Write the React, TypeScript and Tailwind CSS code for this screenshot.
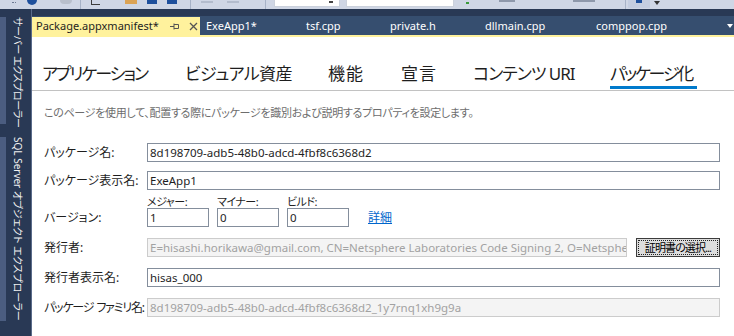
import React from 'react';

const TOOL_BG = 'bg-[#cfd6e5]';

const Toolbar: React.FC = () => (
  <div className={`h-[9px] ${TOOL_BG} flex items-start overflow-hidden shrink-0`}>
    <div className="ml-[12px] mt-[2px] h-[2px] w-[4px] border-t border-dotted border-[#6d7a93]" />
    <div className="ml-[11px] h-[5px] w-[10px] rounded-b-full bg-[#1e4f9c]" />
    <div className="ml-[23px] h-[4px] w-[12px] rounded-b-full bg-[#b8bfcc]" />
    <div className="ml-[8px] h-[9px] w-px bg-[#a7b2c7]" />
    <div className="ml-[10px] h-[5px] w-[9px] border-b border-l border-[#3c3c3c]" />
    <div className="ml-[25px] h-[4px] w-[12px] bg-[#dba355]" />
    <div className="ml-[10px] h-[4px] w-[10px] bg-[#1e4f9c]" />
    <div className="ml-[10px] h-[4px] w-[10px] bg-[#1e4f9c]" />
    <div className="ml-[13px] h-[9px] w-px bg-[#a7b2c7]" />
    <div className="ml-[10px] mt-[1px] h-[2px] w-[12px] bg-[#b3bccd]" />
    <div className="ml-[14px] mt-[1px] h-[2px] w-[12px] bg-[#b3bccd]" />
    <div className="ml-[26px] h-[9px] w-px bg-[#a7b2c7]" />
    <div className="ml-[8px] h-[7px] w-[66px] bg-white border-b border-x border-[#cbd1dc] flex justify-end">
      <div className="mr-[6px] mt-[1px] h-[2px] w-[4px] bg-[#444]" />
    </div>
    <div className="ml-[6px] h-[7px] w-[108px] bg-white border-b border-x border-[#cbd1dc]" />
    <div className="ml-[12px] mt-[2px] h-[2px] w-[3px] bg-[#3a9a3a]" />
    <div className="ml-[30px] h-[2px] w-[16px] bg-[#8e98ab]" />
    <div className="ml-[58px] h-[2px] w-[22px] bg-[#8e98ab]" />
    <div className="ml-[30px] h-[9px] w-px bg-[#a7b2c7]" />
    <div className="ml-[2px] h-[8px] w-[22px] bg-[#c4cde0] flex justify-center">
      <div className="h-[3px] w-[6px] bg-[#1e4f9c]" />
    </div>
    <div className="ml-[4px] mt-[1px] w-0 h-0 border-x-[3px] border-x-transparent border-t-[4px] border-t-[#333]" />
  </div>
);

const SideTab: React.FC<{ label: string; h: string; mt: string; tr: string }> = ({ label, h, mt, tr }) => (
  <div className={`flex ${h} ${mt}`}>
    <div className="w-[6px] bg-[#4b5d80]" />
    <div className={`ml-[5px] w-[13px] flex justify-start leading-[13px] text-[#f0f0f0] [writing-mode:vertical-rl] [text-orientation:sideways] whitespace-nowrap ${tr}`}>
      {label}
    </div>
  </div>
);

const Sidebar: React.FC = () => (
  <div className="w-[32px] shrink-0 bg-[#293955] border-r border-[#5a6b8a] flex flex-col">
    <SideTab label="サーバー エクスプローラー" h="h-[107px]" mt="mt-[8px]" tr="text-[10px] tracking-[-0.4px]" />
    <SideTab label="SQL Server オブジェクト エクスプローラー" h="h-[184px]" mt="mt-[13px]" tr="text-[10px] tracking-[0px]" />
  </div>
);

const DocTab: React.FC<{ name: string; w: string }> = ({ name, w }) => (
  <div className={`${w} shrink-0 pl-[6px] text-[11px] leading-[19px] text-white whitespace-nowrap`}>{name}</div>
);

const TabStrip: React.FC = () => (
  <div className="shrink-0">
    <div className="h-[7px] bg-[#293955]" />
    <div className="h-[19px] bg-[#364e6f] flex items-end">
      <div className="w-[168px] h-[18px] bg-[#fff29d] flex items-center pl-[4px] text-[11px] text-[#1e1e1e] whitespace-nowrap">
        <span className="w-[125px]">Package.appxmanifest*</span>
        <svg className="ml-[9px]" width="9" height="9" viewBox="0 0 9 9">
          <path d="M0 4.5H4M4 1.5V7.5M4 2.5H8.5V6.5H4" stroke="#555" fill="none" strokeWidth="1" />
        </svg>
        <svg className="ml-[10px]" width="9" height="9" viewBox="0 0 9 9">
          <path d="M1 1L8 8M8 1L1 8" stroke="#555" strokeWidth="1.3" />
        </svg>
      </div>
      <DocTab name="ExeApp1*" w="w-[100px]" />
      <DocTab name="tsf.cpp" w="w-[84px]" />
      <DocTab name="private.h" w="w-[95px]" />
      <DocTab name="dllmain.cpp" w="w-[111px]" />
      <DocTab name="comppop.cpp" w="w-[110px]" />
      <div className="flex-1 h-[19px] flex items-center justify-end pr-[1px]">
        <div className="w-0 h-0 border-x-[3px] border-x-transparent border-t-[4px] border-t-white" />
      </div>
    </div>
    <div className="h-[2px] bg-[#fff29d]" />
  </div>
);

const pivots = [
  { t: 'アプリケーション', w: 'w-[106px]', tr: 'tracking-[-2px]' },
  { t: 'ビジュアル資産', w: 'w-[106px]', tr: 'tracking-[-0.5px]' },
  { t: '機能', w: 'w-[36px]', tr: 'tracking-[1px]' },
  { t: '宣言', w: 'w-[35px]', tr: 'tracking-[1px]' },
  { t: 'コンテンツ URI', w: 'w-[100px]', tr: 'tracking-[-1px]' },
  { t: 'パッケージ化', w: 'w-[87px]', tr: 'tracking-[-2.2px]', active: true },
];

const Pivot: React.FC = () => (
  <div className="pt-[25px] pl-[10px] border-b border-[#c2c2c2] flex gap-[37px]">
    {pivots.map((p) => (
      <div key={p.t} className={`${p.w} shrink-0 flex flex-col`}>
        <div className={`text-[17px] leading-[24px] text-[#1e1e1e] whitespace-nowrap ${p.tr}`}>{p.t}</div>
        <div className={`h-[3px] mb-[1px] ${p.active ? 'bg-[#007acc]' : ''}`} />
      </div>
    ))}
  </div>
);

const Input: React.FC<{ value: string; w?: string; disabled?: boolean }> = ({ value, w = 'flex-1', disabled }) => (
  <div
    className={`${w} min-w-0 h-[19px] border px-[2px] text-[11.5px] leading-[17px] whitespace-nowrap overflow-hidden ${
      disabled ? 'border-[#cccccc] bg-[#f4f4f4] text-[#a2a2a2]' : 'border-[#848e9c] bg-white text-[#1e1e1e]'
    }`}
  >
    {value}
  </div>
);

const Row: React.FC<{ label: React.ReactNode; mt: string; tr?: string; children: React.ReactNode }> = ({ label, mt, tr = '', children }) => (
  <div className={`flex items-center ${mt}`}>
    <div className={`w-[103px] shrink-0 text-[12px] text-[#1e1e1e] whitespace-nowrap ${tr}`}>{label}</div>
    {children}
  </div>
);

const VersionBox: React.FC<{ label: string; value: string; ml?: string }> = ({ label, value, ml = '' }) => (
  <div className={`flex flex-col ${ml}`}>
    <div className="h-[12px] text-[11px] leading-[12px] tracking-[-0.5px] text-[#1e1e1e] whitespace-nowrap">{label}</div>
    <Input value={value} w="w-[62px]" />
  </div>
);

export default function App() {
  return (
    <div className="w-[734px] h-[336px] overflow-hidden flex flex-col bg-white font-['Noto_Sans','Noto_Sans_CJK_JP',sans-serif] [font-feature-settings:'palt']">
      <Toolbar />
      <div className="flex flex-1 min-h-0">
        <Sidebar />
        <div className="flex-1 flex flex-col min-w-0">
          <TabStrip />
          <Pivot />
          <div className="pl-[12px] pr-[14px]">
            <div className="mt-[14px] text-[11px] leading-[16px] tracking-[-0.3px] text-[#6d6d6d] whitespace-nowrap">
              このページを使用して、配置する際にパッケージを識別および説明するプロパティを設定します。
            </div>
            <Row label="パッケージ名:" mt="mt-[22px]">
              <Input value="8d198709-adb5-48b0-adcd-4fbf8c6368d2" />
            </Row>
            <Row label="パッケージ表示名:" mt="mt-[9px]">
              <Input value="ExeApp1" />
            </Row>
            <div className="flex items-end mt-[6px]">
              <div className="w-[103px] shrink-0 h-[19px] flex items-center text-[12px] text-[#1e1e1e]">バージョン:</div>
              <VersionBox label="メジャー:" value="1" />
              <VersionBox label="マイナー:" value="0" ml="ml-[8px]" />
              <VersionBox label="ビルド:" value="0" ml="ml-[8px]" />
              <a className="ml-[19px] mb-[1px] text-[12px] leading-[17px] text-[#0066cc] underline">詳細</a>
            </div>
            <Row label="発行者:" mt="mt-[11px]">
              <Input disabled value="E=hisashi.horikawa@gmail.com, CN=Netsphere Laboratories Code Signing 2, O=Netsphere" />
              <button className="ml-[9px] w-[84px] shrink-0 h-[19px] border border-[#3c3c3c] bg-[#dddddd] p-px">
                <div className="h-full border border-dotted border-[#222] text-[11px] leading-[14px] tracking-[-0.9px] text-black whitespace-nowrap flex items-center justify-center">
                  証明書の選択...
                </div>
              </button>
            </Row>
            <Row label="発行者表示名:" mt="mt-[11px]">
              <Input value="hisas_000" />
            </Row>
            <Row
              label={
                <>
                  パッケージ<span className="ml-[3px]">ファミリ名:</span>
                </>
              }
              mt="mt-[11px]"
              tr="text-[11.5px] tracking-[-1.2px]"
            >
              <Input disabled value="8d198709-adb5-48b0-adcd-4fbf8c6368d2_1y7rnq1xh9g9a" />
            </Row>
          </div>
        </div>
      </div>
    </div>
  );
}
